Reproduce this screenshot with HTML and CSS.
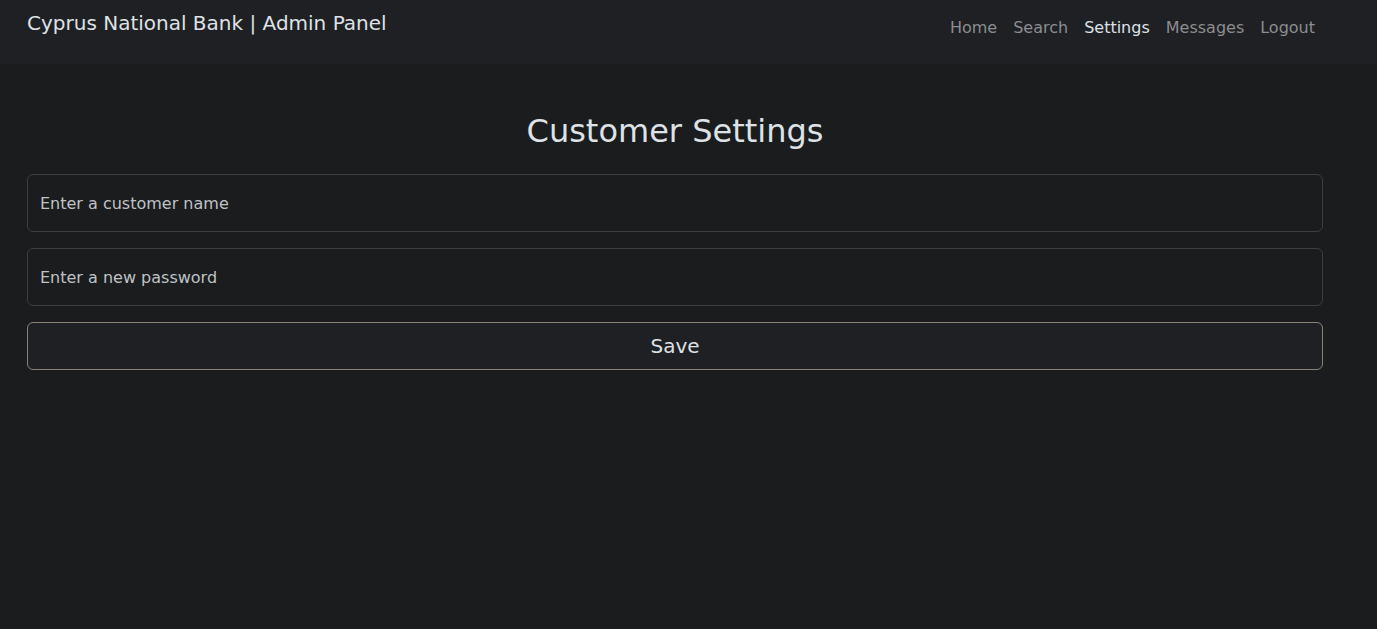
FILE: index.html
```html
<!DOCTYPE html>
<html lang="en">
<head>
<meta charset="utf-8">
<title>Cyprus National Bank | Admin Panel</title>
<link rel="stylesheet" href="styles.css">
</head>
<body>
<nav class="navbar">
  <a class="brand" href="#">Cyprus National Bank | Admin Panel</a>
  <ul class="nav">
    <li><a class="nav-link" href="#">Home</a></li>
    <li><a class="nav-link" href="#">Search</a></li>
    <li><a class="nav-link active" href="#">Settings</a></li>
    <li><a class="nav-link" href="#">Messages</a></li>
    <li><a class="nav-link" href="#">Logout</a></li>
  </ul>
</nav>
<main class="content">
  <h2 class="title">Customer Settings</h2>
  <form class="form">
    <input class="field" type="text" placeholder="Enter a customer name">
    <input class="field" type="password" placeholder="Enter a new password">
    <button class="btn" type="button">Save</button>
  </form>
</main>
</body>
</html>
```
FILE: styles.css
```css
* { box-sizing: border-box; }
html, body { margin: 0; padding: 0; }
body {
  background: #1b1c1e;
  color: #dee2e6;
  font-family: "DejaVu Sans", sans-serif;
  font-size: 16px;
  height: 629px;
}
.navbar {
  background: #1f2023;
  height: 64px;
  display: flex;
  justify-content: space-between;
  align-items: flex-start;
  padding: 0 54px 0 27px;
}
.brand {
  margin-top: 8px;
  font-size: 20px;
  line-height: 30px;
  color: #dee2e6;
  text-decoration: none;
}
.nav {
  list-style: none;
  margin: 16px 0 0;
  padding: 0;
  display: flex;
}
.nav-link {
  display: block;
  padding: 0 8px;
  line-height: 24px;
  color: #8b8d90;
  text-decoration: none;
}
.nav-link.active { color: #dee2e6; }
.content {
  padding: 0 54px 0 27px;
}
.title {
  margin: 48px 0 24px;
  text-align: center;
  font-size: 32px;
  font-weight: 400;
  line-height: 38px;
  color: #dee2e6;
}
.form {
  display: flex;
  flex-direction: column;
  gap: 16px;
}
.field {
  height: 58px;
  padding: 0 12px;
  background: #1b1c1e;
  border: 1px solid #3d3e41;
  border-radius: 6px;
  font-family: "DejaVu Sans", sans-serif;
  font-size: 16px;
  color: #dee2e6;
}
.field::placeholder { color: #bfc2c5; }
.btn {
  height: 48px;
  background: #1f2023;
  border: 1px solid #8a8276;
  border-radius: 6px;
  font-family: "DejaVu Sans", sans-serif;
  font-size: 20px;
  color: #dee2e6;
}
```
